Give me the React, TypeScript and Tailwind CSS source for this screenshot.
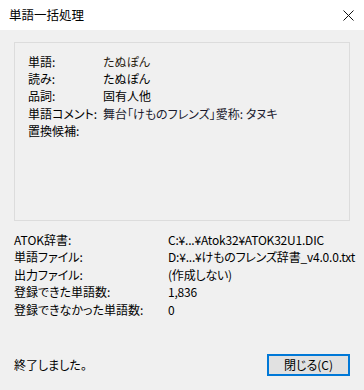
const font = "font-['Noto_Sans_CJK_JP','Noto_Sans',sans-serif] [font-feature-settings:'palt']";

const wordRows = [
  { label: "単語:", value: "たぬぽん" },
  { label: "読み:", value: "たぬぽん" },
  { label: "品詞:", value: "固有人他" },
  { label: "単語コメント:", value: "舞台「けものフレンズ」愛称: タヌキ" },
  { label: "置換候補:", value: "" },
];

const resultRows = [
  { label: "ATOK辞書:", value: "C:¥...¥Atok32¥ATOK32U1.DIC" },
  { label: "単語ファイル:", value: "D:¥...¥けものフレンズ辞書_v4.0.0.txt" },
  { label: "出力ファイル:", value: "(作成しない)" },
  { label: "登録できた単語数:", value: "1,836" },
  { label: "登録できなかった単語数:", value: "0" },
];

const App = () => {
  return (
    <div className={`w-[364px] h-[390px] flex flex-col bg-[#f0f0f0] text-[12px] text-black whitespace-nowrap ${font}`}>
      {/* title bar */}
      <div className="h-[30px] bg-white flex items-center justify-between pl-[9px] pr-[10px]">
        <span className="text-[12.5px] leading-none [font-feature-settings:normal]">単語一括処理</span>
        <svg width="11" height="11" viewBox="0 0 11 11">
          <path d="M0.5 0.5 L10.5 10.5 M10.5 0.5 L0.5 10.5" stroke="#111" strokeWidth="1" />
        </svg>
      </div>

      <div className="flex-1 flex flex-col px-[14px]">
        {/* word details */}
        <div className="mt-[12px] h-[179px] border border-[#dcdcdc] pl-[13px] pt-[10px]">
          {wordRows.map((row, i) => (
            <div key={i} className="flex h-[17.3px] items-center leading-none">
              <span className="w-[75px] shrink-0">{row.label}</span>
              <span className={i === 0 ? "text-[#2a1c10]" : i === 3 ? "text-[#1a1a2e]" : ""}>{row.value}</span>
            </div>
          ))}
        </div>

        {/* results */}
        <div className="mt-[10px] flex flex-col">
          {resultRows.map((row, i) => (
            <div key={i} className="flex h-[17.5px] items-center leading-none">
              <span className="w-[154px] shrink-0">{row.label}</span>
              <span className="tracking-[-0.2px]">{row.value}</span>
            </div>
          ))}
        </div>

        {/* footer */}
        <div className="mt-[35px] flex items-center justify-between">
          <span className="leading-none">終了しました。</span>
          <button className="w-[83px] h-[22px] border-2 border-[#0078d7] bg-[#e1e1e1] flex items-center justify-center leading-none">
            閉じる(C)
          </button>
        </div>
      </div>
    </div>
  );
};

export default App;
